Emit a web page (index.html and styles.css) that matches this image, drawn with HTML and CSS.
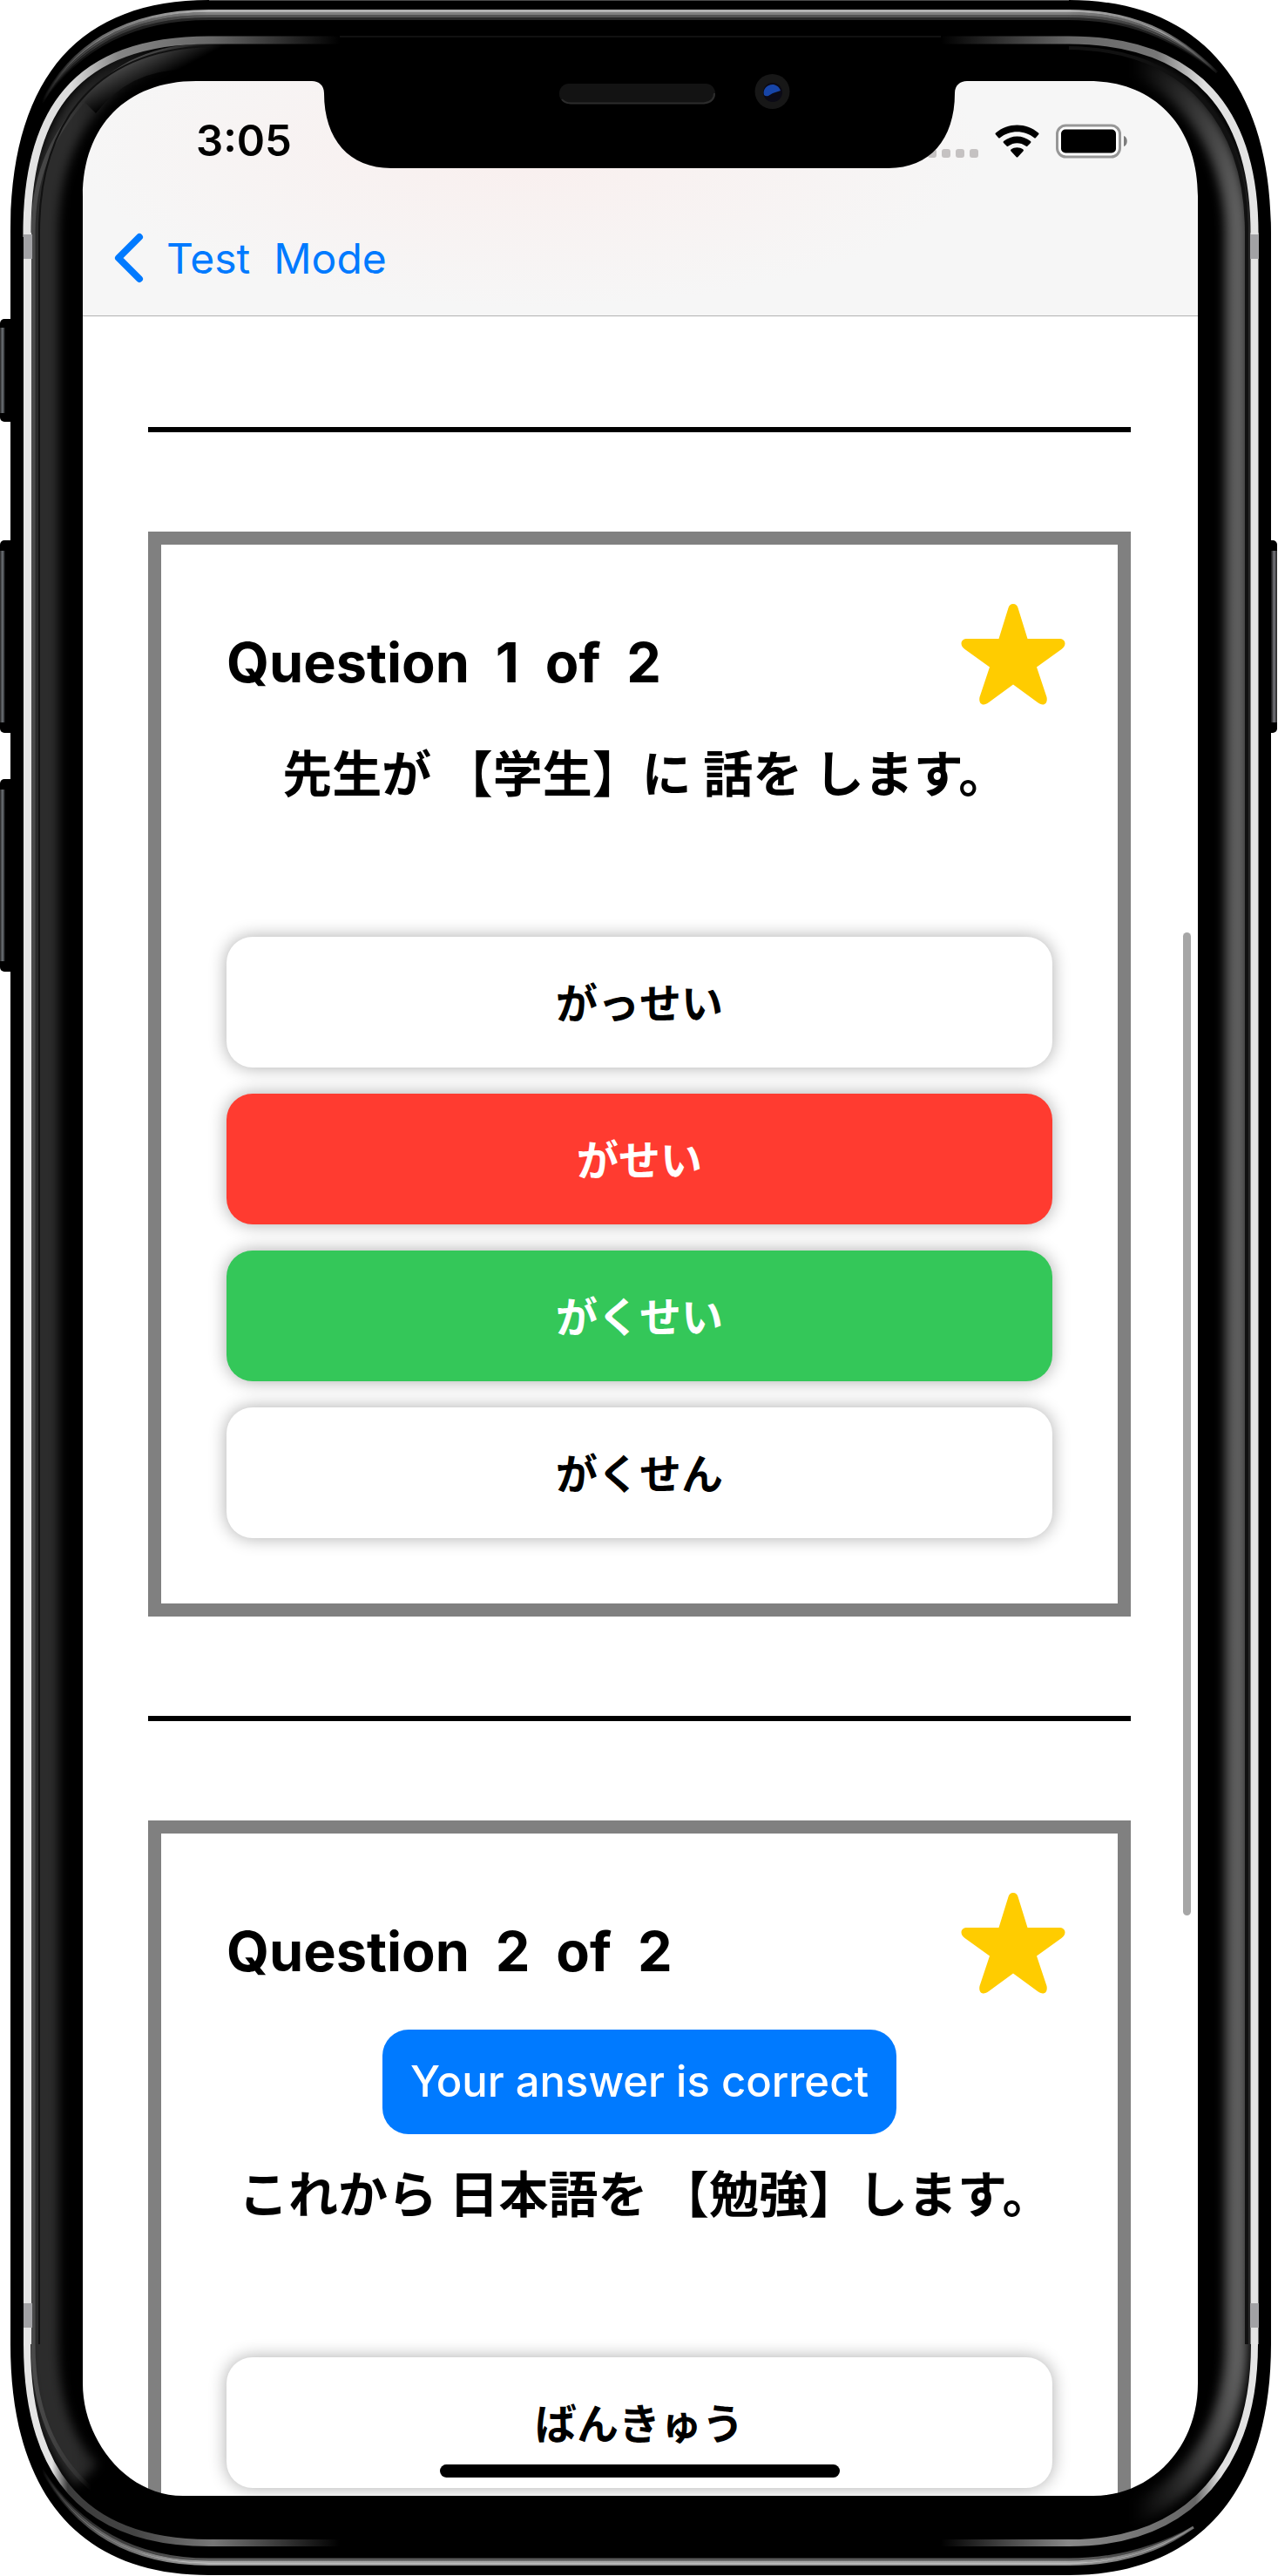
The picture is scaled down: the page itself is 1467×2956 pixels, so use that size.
FILE: index.html
```html
<!DOCTYPE html>
<html lang="en">
<head>
<meta charset="utf-8">
<meta name="viewport" content="width=device-width, initial-scale=1">
<title>Test Mode</title>
<link rel="stylesheet" href="styles.css">
</head>
<body>
<div class="phone">
  <div class="screen">
    <header class="header">
      <div class="status">
        <span class="time">3:05</span>
        <div class="status-icons">
          <svg width="58" height="40" viewBox="0 0 58 40" fill="#c5c2c2" aria-hidden="true">
            <rect x="0" y="29" width="10" height="10" rx="3"/><rect x="16" y="29" width="10" height="10" rx="3"/><rect x="32" y="29" width="10" height="10" rx="3"/><rect x="48" y="29" width="10" height="10" rx="3"/>
          </svg>
          <svg width="51" height="40" viewBox="0 0 51 40" aria-hidden="true">
            <path d="M1 12.500Q0 11.500 1 10.500C15-1.500 36-1.500 50 10.500Q51 11.500 50 12.500L47 16Q46 17 45 16C34 7 17 7 6 16Q5 17 4 16Z"/>
            <path d="M10 22Q9 21 10 20C19 12.500 32 12.500 41 20Q42 21 41 22L37.500 25.500Q36.500 26.500 35.500 25.500C29.500 21 21.500 21 15.500 25.500Q14.500 26.500 13.500 25.500Z"/>
            <path d="M18.500 31.500Q17.500 30.500 18.500 29.500C22.500 26.500 28.500 26.500 32.500 29.500Q33.500 30.500 32.500 31.500L26.500 38Q25.500 39 24.500 38Z"/>
          </svg>
          <svg width="82" height="40" viewBox="0 0 82 40" aria-hidden="true">
            <rect x="1.500" y="2" width="72" height="36" rx="10" fill="#fff" stroke="#979797" stroke-width="3"/>
            <rect x="6" y="6.500" width="63" height="27" rx="5"/>
            <path d="M78 14C83 15 83 25 78 26Z" fill="#7d7d7d"/>
          </svg>
        </div>
      </div>
      <nav class="nav">
        <a class="back" href="#">
          <svg width="34" height="58" viewBox="0 0 34 58" fill="none" stroke="#007aff" stroke-width="8" stroke-linecap="round" stroke-linejoin="round" aria-hidden="true"><path d="M29 5L5 29L29 53"/></svg>
          <span>Test&nbsp; Mode</span>
        </a>
      </nav>
    </header>

    <main class="questions">
      <hr class="rule">
      <section class="card">
        <div class="card-head">
          <h2 class="title">Question&nbsp; 1&nbsp; of&nbsp; 2</h2>
          <svg class="star" viewBox="0 0 120 116" aria-hidden="true"><path d="M60 0C63 0 64.500 1.500 65.500 4.500L76.500 40H112.500C117 40 119.500 42 119.500 45.500C119.500 48 118 50 115.500 52L87 72.500L98.500 107C99.500 112 97.500 115.500 94 115.500C92 115.500 90 114.500 88 113L60 92.500L32 113C30 114.500 28 115.500 26 115.500C22.500 115.500 20.500 112 21.500 107L33 72.500L4.500 52C2 50 0.500 48 0.500 45.500C0.500 42 3 40 7.500 40H43.500L54.500 4.500C55.500 1.500 57 0 60 0Z"/></svg>
        </div>
        <p class="sentence" lang="ja">&nbsp;先生が 【学生】に 話を します。</p>
        <div class="answers" lang="ja">
          <button type="button" class="answer">がっせい</button>
          <button type="button" class="answer answer-wrong">がせい</button>
          <button type="button" class="answer answer-right">がくせい</button>
          <button type="button" class="answer">がくせん</button>
        </div>
      </section>
      <hr class="rule">
      <section class="card">
        <div class="card-head">
          <h2 class="title">Question&nbsp; 2&nbsp; of&nbsp; 2</h2>
          <svg class="star" viewBox="0 0 120 116" aria-hidden="true"><path d="M60 0C63 0 64.500 1.500 65.500 4.500L76.500 40H112.500C117 40 119.500 42 119.500 45.500C119.500 48 118 50 115.500 52L87 72.500L98.500 107C99.500 112 97.500 115.500 94 115.500C92 115.500 90 114.500 88 113L60 92.500L32 113C30 114.500 28 115.500 26 115.500C22.500 115.500 20.500 112 21.500 107L33 72.500L4.500 52C2 50 0.500 48 0.500 45.500C0.500 42 3 40 7.500 40H43.500L54.500 4.500C55.500 1.500 57 0 60 0Z"/></svg>
        </div>
        <p class="result">Your answer is correct</p>
        <p class="sentence sentence-after-result" lang="ja">&nbsp;これから 日本語を 【勉強】します。</p>
        <div class="answers" lang="ja">
          <button type="button" class="answer">ばんきゅう</button>
        </div>
      </section>
    </main>
  </div>
  <div class="scroll-thumb"></div>
  <div class="home-indicator"></div>

  <svg class="frame" viewBox="0 0 1467 2956" preserveAspectRatio="none" fill="none" aria-hidden="true">
    <defs>
      <linearGradient id="sheen" gradientUnits="userSpaceOnUse" x1="48" y1="0" x2="1400" y2="0"><stop stop-color="#fff" stop-opacity="0"/><stop offset=".05" stop-color="#fff" stop-opacity=".6"/><stop offset=".14" stop-color="#fff"/><stop offset=".87" stop-color="#fff"/><stop offset=".95" stop-color="#fff" stop-opacity=".7"/><stop offset="1" stop-color="#fff" stop-opacity="0"/></linearGradient>
      <linearGradient id="silver-tl" gradientUnits="userSpaceOnUse" x1="27" y1="0" x2="390" y2="0"><stop stop-color="#e4e4e4"/><stop offset=".15" stop-color="#dcdcdc"/><stop offset=".3" stop-color="#858585"/><stop offset=".6" stop-color="#666"/><stop offset="1" stop-color="#000"/></linearGradient>
      <linearGradient id="silver-tr" gradientUnits="userSpaceOnUse" x1="1445" y1="0" x2="1080" y2="0"><stop stop-color="#e4e4e4"/><stop offset=".17" stop-color="#e0e0e0"/><stop offset=".32" stop-color="#777"/><stop offset=".6" stop-color="#666"/><stop offset="1" stop-color="#000"/></linearGradient>
      <linearGradient id="silver-bl" gradientUnits="userSpaceOnUse" x1="27" y1="0" x2="390" y2="0"><stop stop-color="#e4e4e4"/><stop offset=".09" stop-color="#e4e4e4"/><stop offset=".14" stop-color="#3c3c3c"/><stop offset=".35" stop-color="#444"/><stop offset=".6" stop-color="#777"/><stop offset="1" stop-color="#000"/></linearGradient>
      <linearGradient id="silver-br" gradientUnits="userSpaceOnUse" x1="1445" y1="0" x2="1080" y2="0"><stop stop-color="#e4e4e4"/><stop offset=".12" stop-color="#e0e0e0"/><stop offset=".2" stop-color="#666"/><stop offset=".6" stop-color="#888"/><stop offset="1" stop-color="#000"/></linearGradient>
      <linearGradient id="glass-l" gradientUnits="userSpaceOnUse" x1="36" y1="0" x2="200" y2="0"><stop stop-color="#2c2c2c"/><stop offset=".3" stop-color="#2c2c2c"/><stop offset="1" stop-color="#000"/></linearGradient>
      <linearGradient id="glass-r" gradientUnits="userSpaceOnUse" x1="1436" y1="0" x2="1300" y2="0"><stop stop-color="#6c6c6c"/><stop offset=".3" stop-color="#484848"/><stop offset="1" stop-color="#000"/></linearGradient>
      <linearGradient id="edge-l" gradientUnits="userSpaceOnUse" x1="36" y1="0" x2="105" y2="0"><stop stop-color="#4a4a4a"/><stop offset=".3" stop-color="#444"/><stop offset="1" stop-color="#444" stop-opacity="0"/></linearGradient>
      <linearGradient id="gloss" gradientUnits="userSpaceOnUse" x1="170" y1="50" x2="190" y2="88"><stop stop-color="#5a5a5a"/><stop offset="1" stop-color="#000"/></linearGradient>
      <linearGradient id="key-l" gradientUnits="userSpaceOnUse" x1="0" y1="0" x2="6" y2="0"><stop stop-color="#222"/><stop offset=".5" stop-color="#70757a"/><stop offset="1" stop-color="#000"/></linearGradient>
      <linearGradient id="key-r" gradientUnits="userSpaceOnUse" x1="1459" y1="0" x2="1466" y2="0"><stop stop-color="#111"/><stop offset=".5" stop-color="#74747a"/><stop offset="1" stop-color="#222"/></linearGradient>
      <filter id="soft" filterUnits="userSpaceOnUse" x="0" y="0" width="1467" height="2956" color-interpolation-filters="sRGB"><feGaussianBlur stdDeviation="6"/></filter>
      <clipPath id="bezel">
        <path clip-rule="evenodd" d="M28 267C28 125 80 42 240 42H1227C1380 42 1444 130 1444 267V2690C1444 2830 1380 2919 1227 2919H240C85 2919 28 2830 28 2690ZM95 225C95 145 145 93 225 93H1250C1325 93 1375 145 1375 225V2735C1375 2810 1320 2864 1255 2864H210C145 2864 95 2800 95 2735Z"/>
      </clipPath>
    </defs>
    <g fill="#000">
      <rect x="0" y="366" width="20" height="118" rx="5"/><rect x="0" y="620" width="20" height="221" rx="5"/><rect x="0" y="894" width="20" height="221" rx="5"/>
      <rect x="1446" y="620" width="20" height="221" rx="5"/>
    </g>
    <path fill="url(#key-l)" d="M0 376H6V474H0ZM0 632H6V829H0ZM0 906H6V1103H0Z"/>
    <path fill="url(#key-r)" d="M1459 632H1466V829H1459Z"/>
    <path fill="#000" fill-rule="evenodd" d="M12 267C12 90 90 0 240 0H1227C1380 0 1459 100 1459 267V2690C1459 2860 1375 2955 1227 2955H240C90 2955 12 2860 12 2690ZM95 225V2735C95 2800 145 2864 210 2864H1255C1320 2864 1375 2810 1375 2735V225C1375 145 1325 93 1250 93H1110C1102 93 1096 98 1096 107C1096 160 1067 193 1020 193H449C401 193 372 160 372 107C372 98 366 93 358 93H225C145 93 95 145 95 225Z"/>
    <path stroke="#4a4a4a" stroke-width="1" d="M240 0.500H1227"/>
    <g stroke="url(#sheen)" stroke-width="3">
      <path stroke-opacity=".7" d="M48 118C80 55 140 12.500 240 12.500H1227C1300 12.500 1350 37 1397 83"/>
      <path stroke-opacity=".5" d="M48 118C82 57 142 15.500 240 15.500H1227C1298 15.500 1350 39 1397 83"/>
      <path stroke-opacity=".33" d="M48 118C84 59 144 18.500 240 18.500H1227C1296 18.500 1348 41 1397 83"/>
      <path stroke-opacity=".16" d="M48 118C86 61 146 21.500 240 21.500H1227C1294 21.500 1346 43 1397 83"/>
      <path stroke-opacity=".35" d="M47 2832C86 2893 146 2937 240 2937H1227C1285 2937 1330 2922 1370 2900"/>
      <path stroke-opacity=".65" d="M47 2832C84 2895 144 2940 240 2940H1227C1287 2940 1332 2924 1370 2900"/>
      <path stroke-opacity=".62" d="M47 2832C82 2897 142 2942.500 240 2942.500H1227C1289 2942.500 1334 2926 1370 2900"/>
    </g>
    <g clip-path="url(#bezel)">
      <path filter="url(#soft)" stroke="url(#glass-l)" stroke-width="34" d="M300 56H240C110 60 50 155 50 267V2690C50 2740 60 2800 100 2840"/>
      <path filter="url(#soft)" stroke="url(#glass-r)" stroke-width="26" d="M1200 60H1227C1350 60 1419 160 1419 267V2690C1419 2800 1350 2895 1230 2898"/>
      <path fill="url(#gloss)" d="M95 115C130 70 180 50 240 50H268Q240 60 217 80Q150 78 110 130Z"/>
      <path stroke="url(#edge-l)" stroke-width="5" d="M110 100C60 150 38 200 38 267V2690C38 2760 60 2820 110 2860"/>
      <path stroke="#111" stroke-width="2" d="M45 2690V267C45 150 100 58 240 53"/>
      <path stroke="#111" stroke-width="4" d="M1431 2690V267C1431 150 1370 57 1227 55"/>
    </g>
    <path stroke="url(#silver-tl)" stroke-width="9" d="M31 272V267C31 130 85 46 240 46H390"/>
    <path stroke="url(#silver-tr)" stroke-width="9" d="M1440 272V267C1440 130 1375 46 1227 46H1080"/>
    <path stroke="url(#silver-bl)" stroke-width="8" d="M31 2660V2690C31 2825 85 2918 240 2918H390"/>
    <path stroke="url(#silver-br)" stroke-width="8" d="M1440 2660V2690C1440 2825 1370 2918 1227 2918H1080"/>
    <path stroke="#e4e4e4" stroke-width="9" d="M31.500 267V2690M1440 267V2690"/>
    <path stroke="#a2a2a5" stroke-width="10" d="M32 269V297M32 2643V2671M1440 269V297M1440 2643V2671"/>
    <path stroke="#222" stroke-width="1" d="M390 42H1080"/>
    <rect x="642" y="96" width="179" height="23" rx="11" fill="#131313"/>
    <path stroke="#2c2c2c" stroke-width="2" d="M645 114Q648 118 655 118.500H808Q820 117 820 107"/>
    <circle cx="886.500" cy="105" r="20" fill="#171717"/>
    <circle cx="887" cy="106" r="11" fill="#0b0a16"/>
    <path fill="#1745a8" d="M877 109C874 98 891 91 896 104Q888 106 882 110Q879 111 877 109Z"/>
  </svg>
</div>
</body>
</html>
```
FILE: styles.css
```css
* { box-sizing: border-box; }

body {
  margin: 0;
  background: #fff;
  color: #000;
  font-family: Inter, "Noto Sans CJK JP", sans-serif;
}

h2, p { margin: 0; }

.phone {
  position: relative;
  display: flex;
  height: 100vh;
  padding: 93px 92px 92px 95px;
}

.screen {
  flex: 1;
  min-width: 0;
  display: flex;
  flex-direction: column;
  overflow: hidden;
  border-radius: 100px;
}

.header {
  flex: none;
  border-bottom: 1px solid #b2b2b2;
  background: radial-gradient(ellipse 520px 180px at 40% 80px, #f9efee, #f6f6f6);
}

.status {
  display: flex;
  align-items: center;
  justify-content: space-between;
  height: 137px;
  padding: 0 81px 0 130px;
}

.time {
  font-size: 49px;
  font-weight: 600;
}

.status-icons {
  display: flex;
  align-items: center;
  gap: 19px;
}

.nav {
  display: flex;
  align-items: center;
  height: 132px;
  padding-left: 36px;
}

.back {
  display: flex;
  align-items: center;
  gap: 26px;
  color: #007aff;
  font-size: 48px;
  text-decoration: none;
}

.questions {
  flex: 1;
  min-height: 0;
  display: flex;
  flex-direction: column;
  gap: 114px;
  padding: 127px 77px 75px 75px;
  overflow-y: auto;
  scrollbar-width: none;
}

.rule {
  flex: none;
  width: 100%;
  height: 6px;
  margin: 0;
  border: 0;
  background: #000;
}

.card {
  flex: none;
  display: flex;
  flex-direction: column;
  padding: 68px 60px 75px;
  border: 15px solid #808080;
}

.card-head {
  display: flex;
  align-items: flex-end;
  justify-content: space-between;
  padding-left: 15px;
}

.title {
  font-size: 63px;
  font-weight: 700;
  line-height: 98px;
}

.star {
  width: 120px;
  height: 116px;
  fill: #ffcc00;
}

.result {
  align-self: center;
  margin-top: 41px;
  padding: 0 32px;
  border-radius: 30px;
  background: #007aff;
  color: #fff;
  font-size: 49px;
  font-weight: 500;
  line-height: 120px;
}

.sentence {
  margin-top: 34px;
  font-size: 57px;
  font-weight: 700;
  line-height: 92px;
  text-align: center;
}

.sentence-after-result { margin-top: 24px; }

.answers {
  display: flex;
  flex-direction: column;
  gap: 30px;
  margin: 140px 15px 0;
}

.answer {
  height: 150px;
  padding: 0 0 4px;
  border: 0;
  border-radius: 30px;
  background: #fff;
  box-shadow: 0 0 20px rgba(0, 0, 0, 0.33);
  color: #000;
  font-family: inherit;
  font-size: 48px;
  font-weight: 600;
}

.answer-wrong {
  background: #ff3b30;
  color: #fff;
}

.answer-right {
  background: #34c759;
  color: #fff;
}

.scroll-thumb {
  position: absolute;
  top: 1070px;
  right: 100px;
  width: 9px;
  height: 1128px;
  border-radius: 5px;
  background: #a6a6a6;
}

.home-indicator {
  position: absolute;
  bottom: 113px;
  left: 50%;
  width: 459px;
  height: 15px;
  margin-left: -229px;
  border-radius: 8px;
  background: #000;
}

.frame {
  position: absolute;
  inset: 0;
  width: 100%;
  height: 100%;
  pointer-events: none;
}
```
